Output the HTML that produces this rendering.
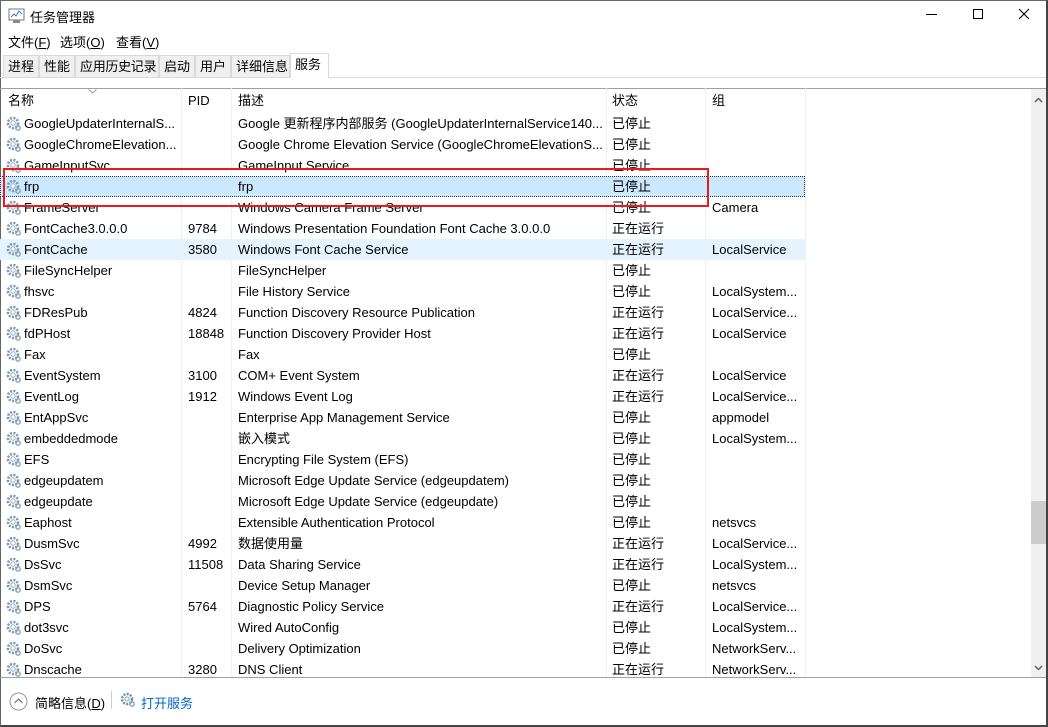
<!DOCTYPE html>
<html><head><meta charset="utf-8"><style>
*{margin:0;padding:0;box-sizing:border-box}
body{width:1048px;height:727px;position:relative;overflow:hidden;background:#fff;font-family:"Liberation Sans","Noto Sans CJK SC",sans-serif;font-size:13px;color:#000}
.abs{position:absolute}
.tab{position:absolute;top:55px;height:23px;background:#f0f0f0;border:1px solid #d9d9d9;line-height:21px;padding:0 0 0 4px;font-size:13px;white-space:nowrap;overflow:hidden}
.row{position:absolute;left:0;width:1031px;height:21px;line-height:21px;white-space:nowrap}
.row span{position:absolute;top:0}
.c1{left:24px}.c2{left:188px}.c3{left:238px}.c4{left:612px}.c5{left:712px}
.g{position:absolute;left:6px;top:3px;width:15px;height:15px}
.vl{position:absolute;top:88px;width:1px;height:589px;background:#f0f0f0}
</style></head><body>
<div class="abs" style="left:0;top:0;width:1048px;height:727px;border-right:2px solid #444;border-bottom:2px solid #444;border-left:1px solid #666;border-top:1px solid #666"></div>
<svg class="abs" style="left:8px;top:8px" width="18" height="16"><rect x="1" y="1" width="15" height="11" fill="#fff" stroke="#777"/><polyline points="3,9 6,6 8,8 11,3 14,6" fill="none" stroke="#2a7fc9"/><rect x="5" y="12" width="7" height="3" fill="#888"/></svg>
<div class="abs" style="left:30px;top:7px">任务管理器</div>
<div class="abs" style="left:926px;top:14px;width:11px;height:1px;background:#000"></div>
<div class="abs" style="left:973px;top:9px;width:10px;height:10px;border:1px solid #000"></div>
<svg class="abs" style="left:1018px;top:8px" width="12" height="12"><path d="M1 1L11 11M11 1L1 11" stroke="#000" stroke-width="1.1"/></svg>
<div class="abs" style="left:8px;top:32px">文件(<u>F</u>)</div>
<div class="abs" style="left:60px;top:32px">选项(<u>O</u>)</div>
<div class="abs" style="left:116px;top:32px">查看(<u>V</u>)</div>
<div class="abs" style="left:0;top:77px;width:1046px;height:1px;background:#d9d9d9"></div>
<div class="tab" style="left:3px;width:36px">进程</div>
<div class="tab" style="left:39px;width:36px">性能</div>
<div class="tab" style="left:75px;width:84px;padding-left:4px;letter-spacing:-0.3px">应用历史记录</div>
<div class="tab" style="left:159px;width:36px">启动</div>
<div class="tab" style="left:195px;width:36px">用户</div>
<div class="tab" style="left:231px;width:59px">详细信息</div>
<div class="tab" style="left:290px;top:53px;height:25px;width:39px;background:#fff;border-bottom:none;line-height:21px">服务</div>
<div class="abs" style="left:0;top:88px;width:1046px;height:1px;background:#a0a0a0"></div>
<div class="abs" style="left:1031px;top:89px;width:15px;height:588px;background:#f0f0f0"></div>
<div class="abs" style="left:1031px;top:501px;width:15px;height:43px;background:#cdcdcd"></div>
<svg class="abs" style="left:1034px;top:97px" width="9" height="6"><path d="M1 5L4.5 1.5L8 5" fill="none" stroke="#606060" stroke-width="1.5"/></svg>
<svg class="abs" style="left:1034px;top:665px" width="9" height="6"><path d="M1 1L4.5 4.5L8 1" fill="none" stroke="#606060" stroke-width="1.5"/></svg>
<div class="vl" style="left:181px"></div><div class="vl" style="left:231px"></div><div class="vl" style="left:606px"></div><div class="vl" style="left:705px"></div><div class="vl" style="left:805px"></div>
<svg class="abs" style="left:88px;top:89px" width="9" height="5"><path d="M0.5 0.5L4.5 4L8.5 0.5" fill="none" stroke="#999"/></svg>
<div class="row" style="top:90px"><span style="left:8px">名称</span><span class="c2">PID</span><span class="c3">描述</span><span class="c4">状态</span><span class="c5">组</span></div>
<div class="abs" style="left:0;top:176px;width:805px;height:21px;background:#cce8ff;border:1px dotted #333"></div>
<div class="abs" style="left:0;top:239px;width:805px;height:21px;background:#e5f3ff"></div>
<div id="rows"></div>
<div class="abs" style="left:3px;top:168px;width:706px;height:39px;border:2px solid #e81c1c"></div>
<div class="abs" style="left:0;top:677px;width:1046px;height:1px;background:#a0a0a0"></div>
<svg class="abs" style="left:9px;top:692px" width="19" height="19"><circle cx="9.5" cy="9.5" r="8.5" fill="none" stroke="#999"/><path d="M5.5 11L9.5 7L13.5 11" fill="none" stroke="#666"/></svg>
<div class="abs" style="left:35px;top:693px">简略信息(<u>D</u>)</div>
<div class="abs" style="left:111px;top:691px;width:1px;height:18px;background:#ccc"></div>
<svg class="abs" style="left:120px;top:692px" width="16" height="16"><circle cx="7" cy="7" r="5" fill="none" stroke="#6a8fb0" stroke-width="2.5" stroke-dasharray="2 1.3"/><circle cx="7" cy="7" r="2" fill="#fff" stroke="#8aa"/><circle cx="12" cy="12" r="2.2" fill="none" stroke="#8aa0b4" stroke-width="1.4"/></svg>
<div class="abs" style="left:141px;top:693px;color:#0066cc">打开服务</div>
<script>
var d=[["GoogleUpdaterInternalS...","","Google 更新程序内部服务 (GoogleUpdaterInternalService140...","已停止",""],
["GoogleChromeElevation...","","Google Chrome Elevation Service (GoogleChromeElevationS...","已停止",""],
["GameInputSvc","","GameInput Service","已停止",""],
["frp","","frp","已停止",""],
["FrameServer","","Windows Camera Frame Server","已停止","Camera"],
["FontCache3.0.0.0","9784","Windows Presentation Foundation Font Cache 3.0.0.0","正在运行",""],
["FontCache","3580","Windows Font Cache Service","正在运行","LocalService"],
["FileSyncHelper","","FileSyncHelper","已停止",""],
["fhsvc","","File History Service","已停止","LocalSystem..."],
["FDResPub","4824","Function Discovery Resource Publication","正在运行","LocalService..."],
["fdPHost","18848","Function Discovery Provider Host","正在运行","LocalService"],
["Fax","","Fax","已停止",""],
["EventSystem","3100","COM+ Event System","正在运行","LocalService"],
["EventLog","1912","Windows Event Log","正在运行","LocalService..."],
["EntAppSvc","","Enterprise App Management Service","已停止","appmodel"],
["embeddedmode","","嵌入模式","已停止","LocalSystem..."],
["EFS","","Encrypting File System (EFS)","已停止",""],
["edgeupdatem","","Microsoft Edge Update Service (edgeupdatem)","已停止",""],
["edgeupdate","","Microsoft Edge Update Service (edgeupdate)","已停止",""],
["Eaphost","","Extensible Authentication Protocol","已停止","netsvcs"],
["DusmSvc","4992","数据使用量","正在运行","LocalService..."],
["DsSvc","11508","Data Sharing Service","正在运行","LocalSystem..."],
["DsmSvc","","Device Setup Manager","已停止","netsvcs"],
["DPS","5764","Diagnostic Policy Service","正在运行","LocalService..."],
["dot3svc","","Wired AutoConfig","已停止","LocalSystem..."],
["DoSvc","","Delivery Optimization","已停止","NetworkServ..."],
["Dnscache","3280","DNS Client","正在运行","NetworkServ..."]];
var g='<svg class="g" viewBox="0 0 15 15"><circle cx="7" cy="7" r="5" fill="none" stroke="#7b96ad" stroke-width="2.6" stroke-dasharray="2 1.4"/><circle cx="7" cy="7" r="2.2" fill="#fff" stroke="#9ab"/><circle cx="12" cy="12" r="2.2" fill="none" stroke="#8aa0b4" stroke-width="1.4"/></svg>';
var h='';d.forEach(function(r,i){h+='<div class="row" style="top:'+(113+21*i)+'px">'+g+'<span class="c1">'+r[0]+'</span><span class="c2">'+r[1]+'</span><span class="c3">'+r[2]+'</span><span class="c4">'+r[3]+'</span><span class="c5">'+r[4]+'</span></div>';});
document.getElementById('rows').innerHTML=h;
</script>
</body></html>
